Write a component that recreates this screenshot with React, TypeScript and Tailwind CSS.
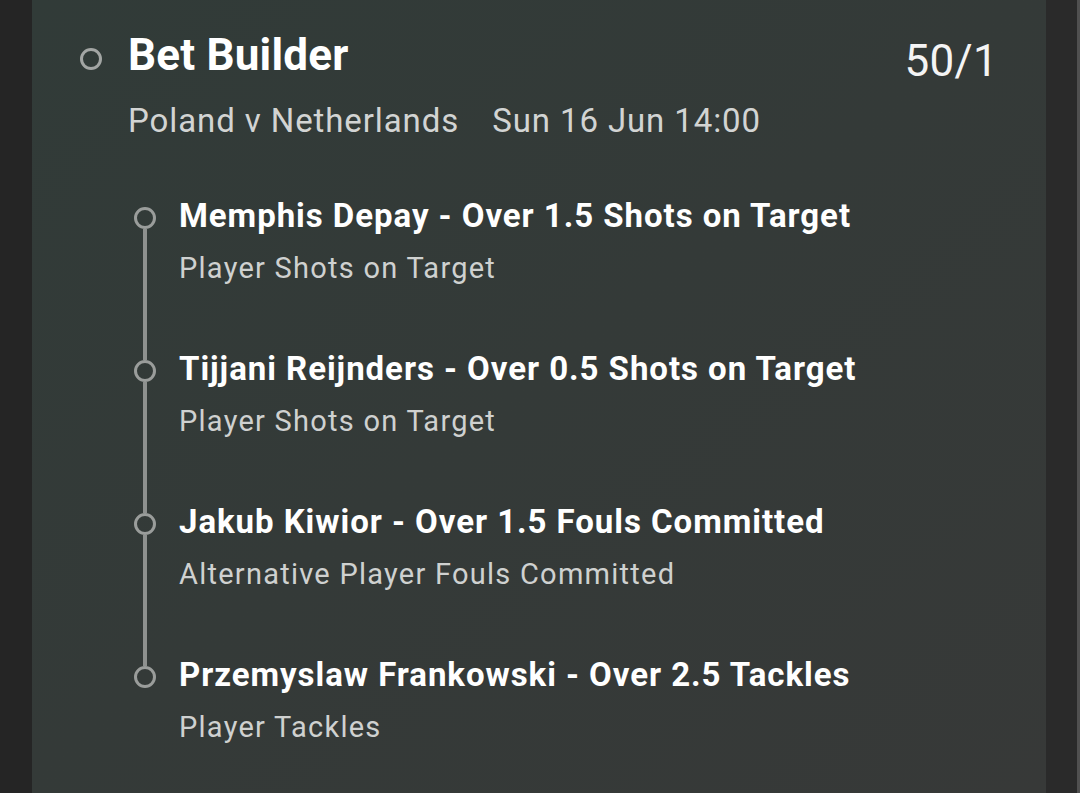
import React from 'react'

type Leg = {
  title: string
  market: string
}

const legs: Leg[] = [
  { title: 'Memphis Depay - Over 1.5 Shots on Target', market: 'Player Shots on Target' },
  { title: 'Tijjani Reijnders - Over 0.5 Shots on Target', market: 'Player Shots on Target' },
  { title: 'Jakub Kiwior - Over 1.5 Fouls Committed', market: 'Alternative Player Fouls Committed' },
  { title: 'Przemyslaw Frankowski - Over 2.5 Tackles', market: 'Player Tackles' },
]

const font = { fontFamily: 'Roboto, "Noto Sans", sans-serif' }

const App = () => {
  return (
    <div className="flex h-[793px] w-full overflow-hidden bg-[#252525]" style={font}>
      <div className="w-[32px] shrink-0 bg-[#252525]" />

      <div className="flex w-[1014px] shrink-0 bg-linear-to-br from-[#313b38] to-[#373938] pl-[48px] pr-[48px] pt-[29px]">
        <div className="mt-[19px] h-[22px] w-[22px] shrink-0 rounded-full border-[3px] border-[#a3a6a4]" />

        <div className="ml-[26px] flex flex-1 flex-col">
          <div className="flex items-start justify-between">
            <h1 className="text-[44px] font-bold leading-[52px] tracking-[0.2px] text-white">Bet Builder</h1>
            <span className="mt-[6px] text-[44px] leading-[52px] tracking-[0.3px] text-[#f4f4f4]">50/1</span>
          </div>

          <div className="mt-[14px] flex text-[33px] leading-[40px] tracking-[0.9px] text-[#d2d4d3]">
            <span>Poland v Netherlands</span>
            <span className="ml-[33px]">Sun 16 Jun 14:00</span>
          </div>

          <ul className="ml-[6px] mt-[57px] flex flex-col">
            {legs.map((leg, i) => {
              const first = i === 0
              const last = i === legs.length - 1
              return (
                <li key={leg.title} className="flex">
                  <div className="flex w-[22px] shrink-0 flex-col items-center">
                    <div className={`h-[9px] w-[4px] ${first ? '' : 'bg-[#8e918f]'}`} />
                    <div className="h-[22px] w-[22px] rounded-full border-[3px] border-[#9a9d9b]" />
                    {!last && <div className="w-[4px] flex-1 bg-[#8e918f]" />}
                  </div>
                  <div className={`ml-[23px] flex flex-col ${last ? '' : 'pb-[65px]'}`}>
                    <span className="text-[33px] font-bold leading-[36px] tracking-[0.95px] text-white">{leg.title}</span>
                    <span className="mt-[16px] text-[29px] leading-[36px] tracking-[1.25px] text-[#cfd1d0]">{leg.market}</span>
                  </div>
                </li>
              )
            })}
          </ul>
        </div>
      </div>

      <div className="flex-1 border-r-[3px] border-[#505050] bg-[#2a2a2a]" />
    </div>
  )
}

export default App
